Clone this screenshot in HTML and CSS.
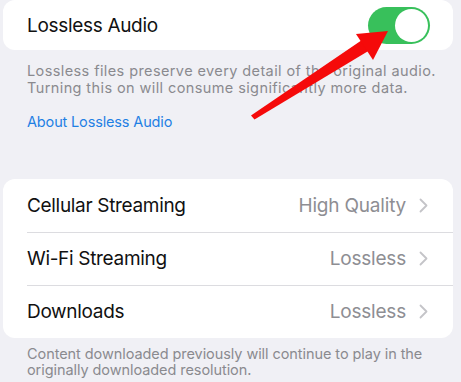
FILE: index.html
```html
<!DOCTYPE html>
<html lang="en">
<head>
<meta charset="utf-8">
<title>Lossless Audio</title>
<link rel="stylesheet" href="styles.css">
</head>
<body>
<div class="page">
  <div class="card card-top">
    <div class="row row-toggle">
      <span class="label">Lossless Audio</span>
      <span class="toggle"><span class="knob"></span></span>
    </div>
  </div>
  <p class="note note-first">Lossless files preserve every detail of the original audio.<br>Turning this on will consume significantly more data.</p>
  <a class="link">About Lossless Audio</a>

  <div class="card card-list">
    <div class="row">
      <span class="label">Cellular Streaming</span>
      <span class="value">High Quality</span>
      <svg class="chev" width="9" height="15" viewBox="0 0 9 15"><path d="M1.5 1.5 L7.5 7.5 L1.5 13.5" fill="none" stroke="#c4c4c8" stroke-width="1.8" stroke-linecap="round" stroke-linejoin="round"/></svg>
    </div>
    <div class="row">
      <span class="label">Wi-Fi Streaming</span>
      <span class="value">Lossless</span>
      <svg class="chev" width="9" height="15" viewBox="0 0 9 15"><path d="M1.5 1.5 L7.5 7.5 L1.5 13.5" fill="none" stroke="#c4c4c8" stroke-width="1.8" stroke-linecap="round" stroke-linejoin="round"/></svg>
    </div>
    <div class="row">
      <span class="label">Downloads</span>
      <span class="value">Lossless</span>
      <svg class="chev" width="9" height="15" viewBox="0 0 9 15"><path d="M1.5 1.5 L7.5 7.5 L1.5 13.5" fill="none" stroke="#c4c4c8" stroke-width="1.8" stroke-linecap="round" stroke-linejoin="round"/></svg>
    </div>
  </div>
  <p class="note note-foot">Content downloaded previously will continue to play in the<br>originally downloaded resolution.</p>

  <svg class="arrow" width="461" height="382" viewBox="0 0 461 382">
    <polygon fill="#f50a0a" points="251,115.5 254.5,119.5 370,50 362,40"/>
    <polygon fill="#f50a0a" points="388,31 356,34 373,60"/>
  </svg>
</div>
</body>
</html>
```

FILE: styles.css
```css
* { box-sizing: border-box; }
html, body {
  margin: 0;
  padding: 0;
  background: #f0f0f5;
}
body {
  width: 461px;
  height: 382px;
  overflow: hidden;
  font-family: Inter, "Noto Sans", "Liberation Sans", sans-serif;
}
.page {
  position: relative;
  padding: 0 8px 0 3px;
  width: 461px;
  height: 382px;
}
.card {
  background: #ffffff;
  border-radius: 12px;
  width: 450px;
}
.card-top {
  height: 50px;
}
.row {
  display: flex;
  align-items: center;
  padding: 0 25px 0 24px;
  height: 53px;
}
.row-toggle {
  height: 50px;
  padding-right: 23px;
}
.label {
  flex: 1;
  font-size: 19px;
  color: #111111;
  letter-spacing: -0.32px;
}
.toggle {
  position: relative;
  width: 62px;
  height: 37px;
  border-radius: 19px;
  background: #38c05b;
  display: flex;
  align-items: center;
  justify-content: flex-end;
  padding-right: 2px;
}
.knob {
  width: 33px;
  height: 33px;
  border-radius: 50%;
  background: #ffffff;
}
.note {
  margin: 0;
  padding-left: 24px;
  font-size: 14.5px;
  line-height: 16.5px;
  color: #8a8a8f;
}
.note-first {
  margin-top: 13px;
  letter-spacing: 0.4px;
}
.link {
  display: block;
  margin-top: 17px;
  padding-left: 24px;
  font-size: 14.5px;
  line-height: 17px;
  color: #1f80e4;
  letter-spacing: -0.15px;
}
.card-list {
  margin-top: 49px;
  overflow: hidden;
}
.card-list .row + .row {
  position: relative;
}
.card-list .row + .row::before {
  content: "";
  position: absolute;
  left: 24px;
  right: 0;
  top: 0;
  height: 1px;
  background: #dcdce0;
}
.value {
  font-size: 19px;
  color: #8e8e93;
  margin-right: 13px;
  letter-spacing: -0.2px;
}
.chev {
  display: block;
}
.note-foot {
  margin-top: 8px;
  line-height: 16px;
  letter-spacing: -0.07px;
}
.arrow {
  position: absolute;
  left: 0;
  top: 0;
  pointer-events: none;
}
```
